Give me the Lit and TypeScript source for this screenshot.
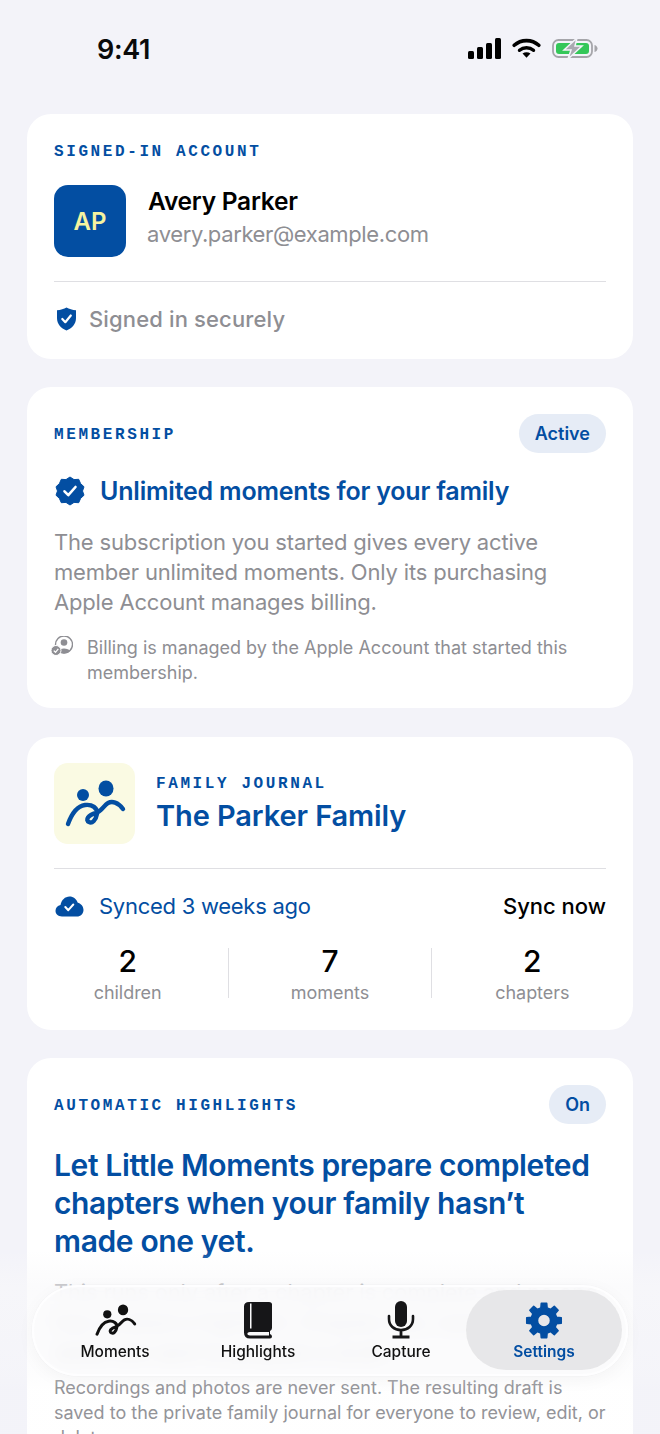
import { css, html, LitElement, svg } from 'lit'
import { customElement } from 'lit/decorators.js'

const BLUE = '#034ea2'

// same mark in the journal tile and the Moments tab, scaled by the svg width
const moments = (color: string) => svg`
  <circle cx="22" cy="18" r="6" fill=${color} />
  <ellipse cx="45" cy="11.500" rx="7.500" ry="8" fill=${color} />
  <path d="M7 47C11 36 17 29 24 28C31 27 37 31 36 37C35 43 31 47 28 45C24 43 27 38 35 36C41 34 43 28 47 26C51 24 57 25 62 32" fill="none" stroke=${color} stroke-width="4.400" stroke-linecap="round" stroke-linejoin="round" />
`

function gearPath(cx: number, cy: number, outer: number, inner: number, hole: number) {
  const pt = (deg: number, r: number) => {
    const a = ((deg - 90) * Math.PI) / 180
    return `${(cx + r * Math.cos(a)).toFixed(2)} ${(cy + r * Math.sin(a)).toFixed(2)}`
  }
  let d = ''
  for (let i = 0; i < 8; i++) {
    const a = i * 45
    d += `${i ? 'L' : 'M'}${pt(a - 14, inner)}L${pt(a - 9, outer)}L${pt(a + 9, outer)}L${pt(a + 14, inner)}`
  }
  d += `ZM${cx} ${cy - hole}A${hole} ${hole} 0 1 0 ${cx} ${cy + hole}A${hole} ${hole} 0 1 0 ${cx} ${cy - hole}Z`
  return d
}

@customElement('app-root')
export class AppRoot extends LitElement {
  static styles = css`
    :host {
      --blue: #034ea2;
      --grey: #8e8e93;
      display: block;
      position: relative;
      height: 1434px;
      overflow: hidden;
      background: #f3f3f9;
      font-family: Inter, 'Noto Sans', sans-serif;
      color: #000;
    }

    .status {
      display: flex;
      justify-content: space-between;
      align-items: center;
      height: 98px;
      padding: 0 62px 0 97px;
      box-sizing: border-box;
    }

    .time {
      font-size: 27px;
      font-weight: 600;
      letter-spacing: -0.3px;
      color: #0a0a0a;
    }

    .status-icons {
      display: flex;
      align-items: center;
      gap: 11px;
      margin-top: -2px;
    }

    .cards {
      display: flex;
      flex-direction: column;
      gap: 28px;
      padding: 16px 27px 0;
    }

    .card {
      background: #fff;
      border-radius: 24px;
      padding: 27px;
    }

    .eyebrow {
      font-family: 'Liberation Mono', monospace;
      font-size: 16px;
      font-weight: 700;
      letter-spacing: 2.6px;
      color: var(--blue);
      line-height: 20px;
    }

    .account {
      height: 245px;
      box-sizing: border-box;
      padding-bottom: 0;
    }

    .account .eyebrow {
      margin-top: 1px;
    }

    .profile {
      display: flex;
      gap: 22px;
      align-items: center;
      margin-top: 23px;
    }

    .avatar {
      width: 72px;
      height: 72px;
      border-radius: 14px;
      background: var(--blue);
      color: #f5f3a0;
      font-size: 24px;
      font-weight: 600;
      display: flex;
      align-items: center;
      justify-content: center;
    }

    .who {
      padding-bottom: 6px;
    }

    .name {
      font-size: 24.500px;
      font-weight: 600;
      letter-spacing: -0.25px;
      line-height: 33px;
    }

    .email {
      font-size: 22px;
      letter-spacing: -0.38px;
      color: var(--grey);
      line-height: 33px;
      margin-left: -1px;
    }

    .rule {
      height: 1px;
      background: #dfdfe3;
    }

    .account .rule {
      margin-top: 24px;
    }

    .secure {
      display: flex;
      align-items: center;
      gap: 12px;
      margin-top: 21px;
      padding-left: 2px;
      font-size: 22px;
      letter-spacing: 0.14px;
      font-weight: 500;
      color: var(--grey);
      line-height: 32px;
    }

    .head {
      display: flex;
      justify-content: space-between;
      align-items: center;
      height: 39px;
    }

    .head .eyebrow {
      margin-top: 2px;
    }

    .pill {
      background: #e6ecf6;
      color: var(--blue);
      font-size: 18px;
      font-weight: 600;
      height: 39px;
      line-height: 39px;
      padding: 0 16px;
      border-radius: 20px;
    }

    .membership {
      height: 321px;
      box-sizing: border-box;
    }

    .unlimited {
      display: flex;
      align-items: center;
      gap: 15px;
      margin-top: 19px;
      padding-left: 1px;
      font-size: 25px;
      font-weight: 600;
      color: var(--blue);
      line-height: 38px;
      letter-spacing: -0.2px;
    }

    .body {
      font-size: 22px;
      letter-spacing: -0.18px;
      line-height: 30px;
      color: var(--grey);
      margin: 17px 0 0;
    }

    .billing {
      display: flex;
      gap: 14px;
      margin-top: 18px;
      font-size: 18px;
      line-height: 25px;
      color: var(--grey);
    }

    .billing svg {
      flex: none;
      margin-top: 1px;
      margin-left: -3px;
    }

    .journal {
      height: 293px;
      box-sizing: border-box;
      margin-top: 1px;
    }

    .family {
      display: flex;
      align-items: center;
      gap: 21px;
      margin-top: -1px;
    }

    .family-text {
      padding-top: 2px;
    }

    .logo {
      width: 81px;
      height: 81px;
      border-radius: 14px;
      background: #fafae3;
      display: flex;
      align-items: center;
      justify-content: center;
    }

    .family-name {
      font-size: 29px;
      font-weight: 600;
      color: var(--blue);
      line-height: 38px;
      letter-spacing: -0.1px;
      margin-top: 3px;
    }

    .journal .rule {
      margin-top: 24px;
    }

    .sync {
      display: flex;
      align-items: center;
      margin-top: 19px;
      line-height: 36px;
    }

    .synced {
      display: flex;
      align-items: center;
      gap: 15px;
      flex: 1;
      padding-left: 1px;
      font-size: 22px;
      letter-spacing: -0.27px;
      color: var(--blue);
    }

    .sync-now {
      font-size: 22px;
      font-weight: 500;
    }

    .stats {
      display: grid;
      grid-template-columns: 1fr 1px 1fr 1px 1fr;
      margin: 17px -27px 0;
      text-align: center;
    }

    .divider {
      height: 50px;
      margin-top: 7px;
      background: #dfdfe3;
    }

    .stat b {
      display: block;
      font-size: 30px;
      font-weight: 500;
      line-height: 40px;
    }

    .stat span {
      display: block;
      font-size: 18px;
      letter-spacing: -0.05px;
      color: var(--grey);
      line-height: 24px;
    }

    .title {
      font-size: 30px;
      font-weight: 600;
      line-height: 38px;
      color: var(--blue);
      margin: 22px 0 0;
      letter-spacing: -0.37px;
    }

    .lead {
      margin: 17px 0 0;
      font-size: 22px;
      line-height: 30px;
      letter-spacing: -0.18px;
      color: var(--grey);
    }

    .fine {
      margin: 8px 0 0;
      font-size: 18px;
      line-height: 25px;
      color: var(--grey);
    }

    .fade {
      position: absolute;
      left: 0;
      right: 0;
      top: 1250px;
      height: 184px;
      background: linear-gradient(rgba(248, 248, 250, 0), rgba(248, 248, 250, 0.6) 20%, rgba(248, 248, 250, 0.3) 68%, rgba(248, 248, 250, 0.05) 76%);
      pointer-events: none;
    }

    .tabbar {
      position: absolute;
      left: 32px;
      top: 1285px;
      width: 596px;
      height: 91px;
      box-sizing: border-box;
      display: flex;
      align-items: flex-start;
      padding: 3px 4px 0 17px;
      border-radius: 46px;
      background: rgba(250, 250, 251, 0.84);
      backdrop-filter: blur(8px);
      border: 2px solid rgba(255, 255, 255, 0.85);
      box-shadow: 0 0 0 1px rgba(0, 0, 0, 0.015), 0 4px 18px rgba(0, 0, 0, 0.04);
    }

    .tab {
      flex: none;
      width: 128px;
      height: 80px;
      display: flex;
      flex-direction: column;
      align-items: center;
      justify-content: flex-end;
      gap: 2px;
      font-size: 15.500px;
      font-weight: 500;
      line-height: 21px;
      color: #111;
      padding-bottom: 8px;
      box-sizing: border-box;
    }

    .tab + .tab {
      margin-left: 15px;
    }

    .tab.active {
      width: 156px;
      margin-left: 1px;
      border-radius: 40px;
      background: rgba(228, 228, 229, 0.85);
      color: var(--blue);
      font-weight: 600;
    }

    .tab svg {
      display: block;
    }
  `

  private statusIcons() {
    return html`<div class="status-icons">
      <svg width="33" height="21" viewBox="0 0 33 21">
        <rect x="0" y="13" width="6" height="8" rx="1.500" fill="#000" />
        <rect x="9" y="9" width="6" height="12" rx="1.500" fill="#000" />
        <rect x="18" y="5" width="6" height="16" rx="1.500" fill="#000" />
        <rect x="27" y="0" width="6" height="21" rx="1.500" fill="#000" />
      </svg>
      <svg width="29" height="20" viewBox="0 0 29 20">
        <path d="M2.200 7.300C9 1 20 1 26.800 7.300" stroke="#000" stroke-width="3.600" fill="none" stroke-linecap="round" />
        <path d="M7.500 12.300C11.500 8.800 17.500 8.800 21.500 12.300" stroke="#000" stroke-width="3.400" fill="none" stroke-linecap="round" />
        <path d="M10.500 15.500L14.500 19.800 18.500 15.500C16 13.700 13 13.700 10.500 15.500Z" fill="#000" />
      </svg>
      <svg width="46" height="19" viewBox="0 0 46 19">
        <rect x="1" y="1" width="39" height="17" rx="5.500" fill="none" stroke="#a5a5aa" stroke-width="1.800" />
        <rect x="4" y="4" width="33" height="11" rx="3" fill="#34c759" />
        <path d="M42.500 6C44.500 6.500 45.500 8 45.500 9.500S44.500 12.500 42.500 13Z" fill="#a5a5aa" />
        <path d="M25 -1L12 11H19L16 20L30 7H23Z" fill="#a9a9b0" stroke="#f3f3f9" stroke-width="1.500" />
      </svg>
    </div>`
  }

  protected render() {
    return html`
      <div class="status">
        <span class="time">9:41</span>
        ${this.statusIcons()}
      </div>

      <div class="cards">
        <section class="card account">
          <div class="eyebrow">SIGNED-IN ACCOUNT</div>
          <div class="profile">
            <div class="avatar">AP</div>
            <div class="who">
              <div class="name">Avery Parker</div>
              <div class="email">avery.parker@example.com</div>
            </div>
          </div>
          <div class="rule"></div>
          <div class="secure">
            <svg width="21" height="24" viewBox="0 0 21 24">
              <path d="M10.500 0.500C13 2 16.500 3 20 3.300V11C20 17 16 21.300 10.500 23.500C5 21.300 1 17 1 11V3.300C4.500 3 8 2 10.500 0.500Z" fill=${BLUE} />
              <path d="M6.300 12L9.300 15.200L14.800 8.500" fill="none" stroke="#fff" stroke-width="2.200" stroke-linecap="round" stroke-linejoin="round" />
            </svg>
            Signed in securely
          </div>
        </section>

        <section class="card membership">
          <div class="head">
            <div class="eyebrow">MEMBERSHIP</div>
            <div class="pill">Active</div>
          </div>
          <div class="unlimited">
            <svg width="30" height="30" viewBox="0 0 30 30">
              <path d="M15 1L19 3.600 23.700 3.300 25.600 7.600 29 10.800 27.500 15 29 19.200 25.600 22.400 23.700 26.700 19 26.400 15 29 11 26.400 6.300 26.700 4.400 22.400 1 19.200 2.500 15 1 10.800 4.400 7.600 6.300 3.300 11 3.600Z" fill=${BLUE} stroke=${BLUE} stroke-linejoin="round" stroke-width="1" />
              <path d="M9.500 15.300L13.300 19.200L20.500 11" fill="none" stroke="#fff" stroke-width="2.600" stroke-linecap="round" stroke-linejoin="round" />
            </svg>
            Unlimited moments for your family
          </div>
          <p class="body">
            The subscription you started gives every active member unlimited moments. Only its
            purchasing Apple Account manages billing.
          </p>
          <div class="billing">
            <svg width="22" height="20" viewBox="0 0 22 20">
              <circle cx="13" cy="8.500" r="8.500" fill="none" stroke="#8e8e93" stroke-width="1.400" />
              <circle cx="13" cy="6.500" r="3.300" fill="#8e8e93" />
              <path d="M7 15C8 11.500 18 11.500 19 15C17.500 16.800 15.500 17.500 13 17.500S8.500 16.800 7 15Z" fill="#8e8e93" />
              <circle cx="5" cy="14.500" r="5" fill="#8e8e93" stroke="#fff" stroke-width="1" />
              <path d="M2.800 14.600L4.500 16.300L7.300 12.800" fill="none" stroke="#fff" stroke-width="1.300" />
            </svg>
            <span>Billing is managed by the Apple Account that started this membership.</span>
          </div>
        </section>

        <section class="card journal">
          <div class="family">
            <div class="logo">
              <svg width="68" height="54" viewBox="0 0 68 54">${moments(BLUE)}</svg>
            </div>
            <div class="family-text">
              <div class="eyebrow">FAMILY JOURNAL</div>
              <div class="family-name">The Parker Family</div>
            </div>
          </div>
          <div class="rule"></div>
          <div class="sync">
            <div class="synced">
              <svg width="29" height="21" viewBox="0 0 29 21">
                <path d="M7 20.500C3 20.500 0.500 18 0.500 14.800C0.500 11.800 2.500 9.500 5.500 9C6.500 4 10 0.500 14.500 0.500C18.500 0.500 21.500 3 22.800 6.800C26 7.500 28.500 10.500 28.500 14C28.500 17.800 25.500 20.500 22 20.500Z" fill=${BLUE} />
                <path d="M10.300 11L13.300 14.200L18.300 8.500" fill="none" stroke="#fff" stroke-width="2" stroke-linecap="round" stroke-linejoin="round" />
              </svg>
              Synced 3 weeks ago
            </div>
            <div class="sync-now">Sync now</div>
          </div>
          <div class="stats">
            <div class="stat"><b>2</b><span>children</span></div>
            <div class="divider"></div>
            <div class="stat"><b>7</b><span>moments</span></div>
            <div class="divider"></div>
            <div class="stat"><b>2</b><span>chapters</span></div>
          </div>
        </section>

        <section class="card">
          <div class="head">
            <div class="eyebrow">AUTOMATIC HIGHLIGHTS</div>
            <div class="pill">On</div>
          </div>
          <h2 class="title">Let Little Moments prepare completed chapters when your family hasn’t made one yet.</h2>
          <p class="lead">
            This runs only after a chapter is complete and no one has created a highlight. Chapter
            text, names and dates are sent to prepare a draft.
          </p>
          <p class="fine">
            Recordings and photos are never sent. The resulting draft is saved to the private
            family journal for everyone to review, edit, or delete.
          </p>
        </section>
      </div>

      <div class="fade"></div>

      <nav class="tabbar">
        <div class="tab">
          <svg width="47" height="37" viewBox="0 0 68 54">${moments('#111')}</svg>
          Moments
        </div>
        <div class="tab">
          <svg width="28" height="38" viewBox="0 0 28 38">
            <path d="M5 1H25Q28 1 28 3.500V27Q28 29 26 30V33Q28 33.500 28 35.500Q28 37.500 26 37.500H6Q0 37.500 0 31.500V5.500Q0 1 5 1Z" fill="#161618" />
            <rect x="6" y="2.500" width="1.500" height="25" fill="#fafafb" />
            <path d="M6 31H25V34.500H6Q3.300 34.500 3.300 32.700Q3.300 31 6 31Z" fill="#fafafb" />
          </svg>
          Highlights
        </div>
        <div class="tab">
          <svg width="28" height="38" viewBox="0 0 28 38">
            <rect x="8" y="0" width="12" height="26" rx="6" fill="#161618" />
            <path d="M2 15V18C2 24.500 7 29 14 29S26 24.500 26 18V15" fill="none" stroke="#161618" stroke-width="2.600" stroke-linecap="round" />
            <path d="M14 29V35M5.500 36H22.500" stroke="#161618" stroke-width="2.800" />
          </svg>
          Capture
        </div>
        <div class="tab active">
          <svg width="38" height="38" viewBox="0 0 38 38">
            <path fill-rule="evenodd" d=${gearPath(19, 19.500, 17.500, 13, 6.500)} fill=${BLUE} stroke=${BLUE} stroke-linejoin="round" stroke-width="1.500" />
          </svg>
          Settings
        </div>
      </nav>
    `
  }
}

declare global {
  interface HTMLElementTagNameMap {
    'app-root': AppRoot
  }
}
